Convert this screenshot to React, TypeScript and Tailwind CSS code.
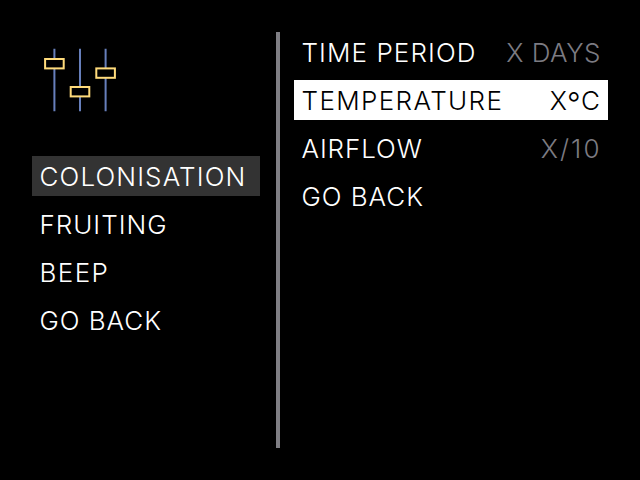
import React from "react";

type Row = {
  label: string;
  track: string;
  value?: React.ReactNode;
  valueTrack?: string;
  state?: "active" | "muted";
};

const left: Row[] = [
  { label: "COLONISATION", track: "tracking-[1.12px]", state: "muted" },
  { label: "FRUITING", track: "tracking-[0.98px]" },
  { label: "BEEP", track: "tracking-[1.4px]" },
  { label: "GO BACK", track: "tracking-[0.95px]" },
];

const right: Row[] = [
  { label: "TIME PERIOD", track: "tracking-[1.08px]", value: "X DAYS", valueTrack: "tracking-[0.45px] mr-[-0.8px]" },
  {
    label: "TEMPERATURE",
    track: "tracking-[1.38px]",
    value: (
      <>
        X<span className="inline-block origin-top scale-115">°</span>C
      </>
    ),
    valueTrack: "tracking-[1.1px] mr-[-1px]",
    state: "active",
  },
  { label: "AIRFLOW", track: "tracking-[0.9px]", value: "X/10", valueTrack: "tracking-[2.1px] mr-[-1.6px]" },
  { label: "GO BACK", track: "tracking-[0.95px]" },
];

function Item({ row }: { row: Row }) {
  const tone =
    row.state === "active" ? "bg-white text-black" : row.state === "muted" ? "bg-[#333333] text-white" : "text-white";
  return (
    <li className={`flex h-10 items-center justify-between pt-[2px] pr-2 pl-[7.5px] whitespace-nowrap ${tone}`}>
      <span className={row.track}>{row.label}</span>
      {row.value && (
        <span className={`${row.valueTrack} ${row.state === "active" ? "text-black" : "text-[#7c7b82]"}`}>
          {row.value}
        </span>
      )}
    </li>
  );
}

function Sliders() {
  return (
    <svg width="74" height="64" viewBox="0 0 74 64" fill="none">
      <path d="M11.4 .8V63.2M37 .8V63.2M62.6 .8V63.2" stroke="#677fbb" strokeWidth="2" />
      <g fill="#000" stroke="#ffdb7b" strokeWidth="2">
        <rect x="2.1" y="11" width="18.6" height="9.4" />
        <rect x="27.7" y="39" width="18.6" height="9.4" />
        <rect x="53.3" y="20.4" width="18.6" height="9.4" />
      </g>
    </svg>
  );
}

export default function App() {
  return (
    <main className="flex h-[480px] w-[640px] bg-black p-8 font-['Inter',sans-serif] text-[26px] leading-10 font-light">
      <aside className="w-[228px]">
        <div className="h-[124px] pt-4 pl-[11px]">
          <Sliders />
        </div>
        <ul className="flex flex-col gap-2">
          {left.map((r) => <Item key={r.label} row={r} />)}
        </ul>
      </aside>
      <div className="mr-[14px] ml-4 w-1 bg-[#7f7e84]" />
      <ul className="flex flex-1 flex-col gap-2">
        {right.map((r) => <Item key={r.label} row={r} />)}
      </ul>
    </main>
  );
}
